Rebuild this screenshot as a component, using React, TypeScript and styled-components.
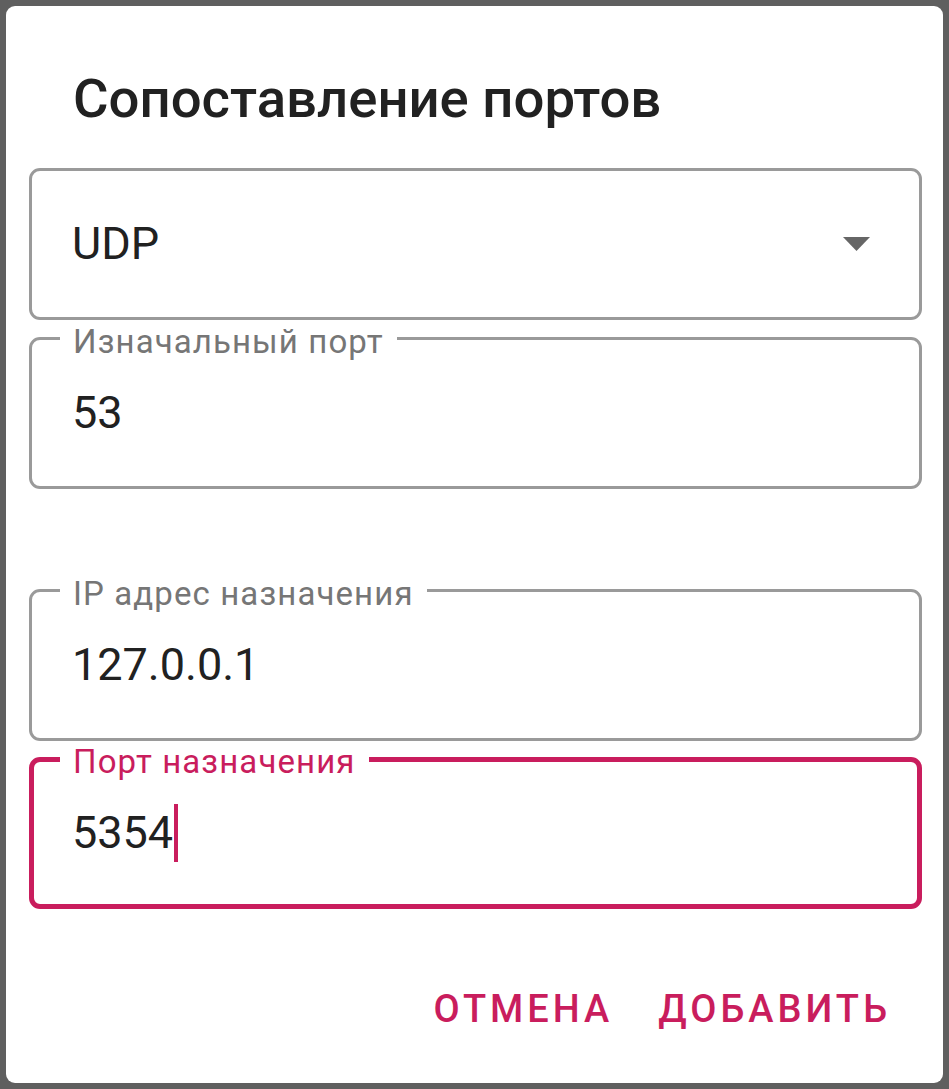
import styled, { createGlobalStyle } from "styled-components";

const PINK = "#c91d5d";

const GlobalStyle = createGlobalStyle`
    html, body {
        margin: 0;
        padding: 0;
        background: #5f5f5f;
    }
    body {
        font-family: Roboto, "Noto Sans", "Liberation Sans", sans-serif;
    }
`;

const Screen = styled.div`
    width: 949px;
    height: 1089px;
    padding: 6px;
    box-sizing: border-box;
`;

const Dialog = styled.div`
    width: 937px;
    height: 1077px;
    box-sizing: border-box;
    background: #fff;
    border-radius: 9px;
    padding: 60px 21px 0 23px;
    display: flex;
    flex-direction: column;
`;

const Title = styled.h1`
    margin: 0 0 38px 44px;
    font-size: 54.5px;
    line-height: 64px;
    font-weight: 500;
    color: #212121;
`;

const Fields = styled.div`
    display: flex;
    flex-direction: column;
`;

interface BoxProps {
    $focused?: boolean;
    $gap?: number;
}

// select and text fields share the outlined box
const Box = styled.div<BoxProps>`
    position: relative;
    height: 152px;
    margin-top: ${p => p.$gap ?? 0}px;
    box-sizing: border-box;
    border: ${p => (p.$focused ? `5px solid ${PINK}` : "3px solid #9a9a9a")};
    border-radius: 11px;
    display: flex;
    align-items: center;
    padding: 0 49px 0 ${p => (p.$focused ? 38 : 40)}px;
`;

const Label = styled.label<BoxProps>`
    position: absolute;
    top: ${p => (p.$focused ? -18 : -16)}px;
    left: ${p => (p.$focused ? 26 : 28)}px;
    padding: 0 13px;
    background: #fff;
    font-size: 33px;
    line-height: 36px;
    letter-spacing: 1.1px;
    color: ${p => (p.$focused ? PINK : "#767676")};
`;

const Value = styled.span`
    flex: 1;
    display: flex;
    align-items: center;
    font-size: 45px;
    line-height: 52px;
    color: #212121;
`;

const Caret = styled.span`
    display: inline-block;
    width: 4px;
    height: 58px;
    margin-left: 1px;
    background: ${PINK};
`;

const Arrow = styled.svg`
    width: 27px;
    height: 14px;
    flex: none;
`;

const Actions = styled.div`
    margin-top: 68px;
    display: flex;
    justify-content: flex-end;
    gap: 17px;
    padding-right: 19px;
`;

const TextButton = styled.button`
    border: none;
    background: none;
    padding: 0 12px 0 16px;
    height: 64px;
    font-family: inherit;
    font-size: 38px;
    font-weight: 500;
    letter-spacing: 4px;
    text-transform: uppercase;
    color: ${PINK};
    cursor: pointer;
`;

interface FieldProps {
    label: string;
    value: string;
    gap: number;
    focused?: boolean;
}

function Field({ label, value, gap, focused }: FieldProps) {
    return (
        <Box $gap={gap} $focused={focused}>
            <Label $focused={focused}>{label}</Label>
            <Value>
                {value}
                {focused && <Caret />}
            </Value>
        </Box>
    );
}

export default function App() {
    return (
        <Screen>
            <GlobalStyle />
            <Dialog>
                <Title>Сопоставление портов</Title>
                <Fields>
                    <Box>
                        <Value>UDP</Value>
                        <Arrow viewBox="0 0 27 14">
                            <path d="M0 0 H27 L13.5 14 Z" fill="#666" />
                        </Arrow>
                    </Box>
                    <Field gap={17} label="Изначальный порт" value="53" />
                    <Field gap={100} label="IP адрес назначения" value="127.0.0.1" />
                    <Field gap={16} label="Порт назначения" value="5354" focused />
                </Fields>
                <Actions>
                    <TextButton>Отмена</TextButton>
                    <TextButton>Добавить</TextButton>
                </Actions>
            </Dialog>
        </Screen>
    );
}
